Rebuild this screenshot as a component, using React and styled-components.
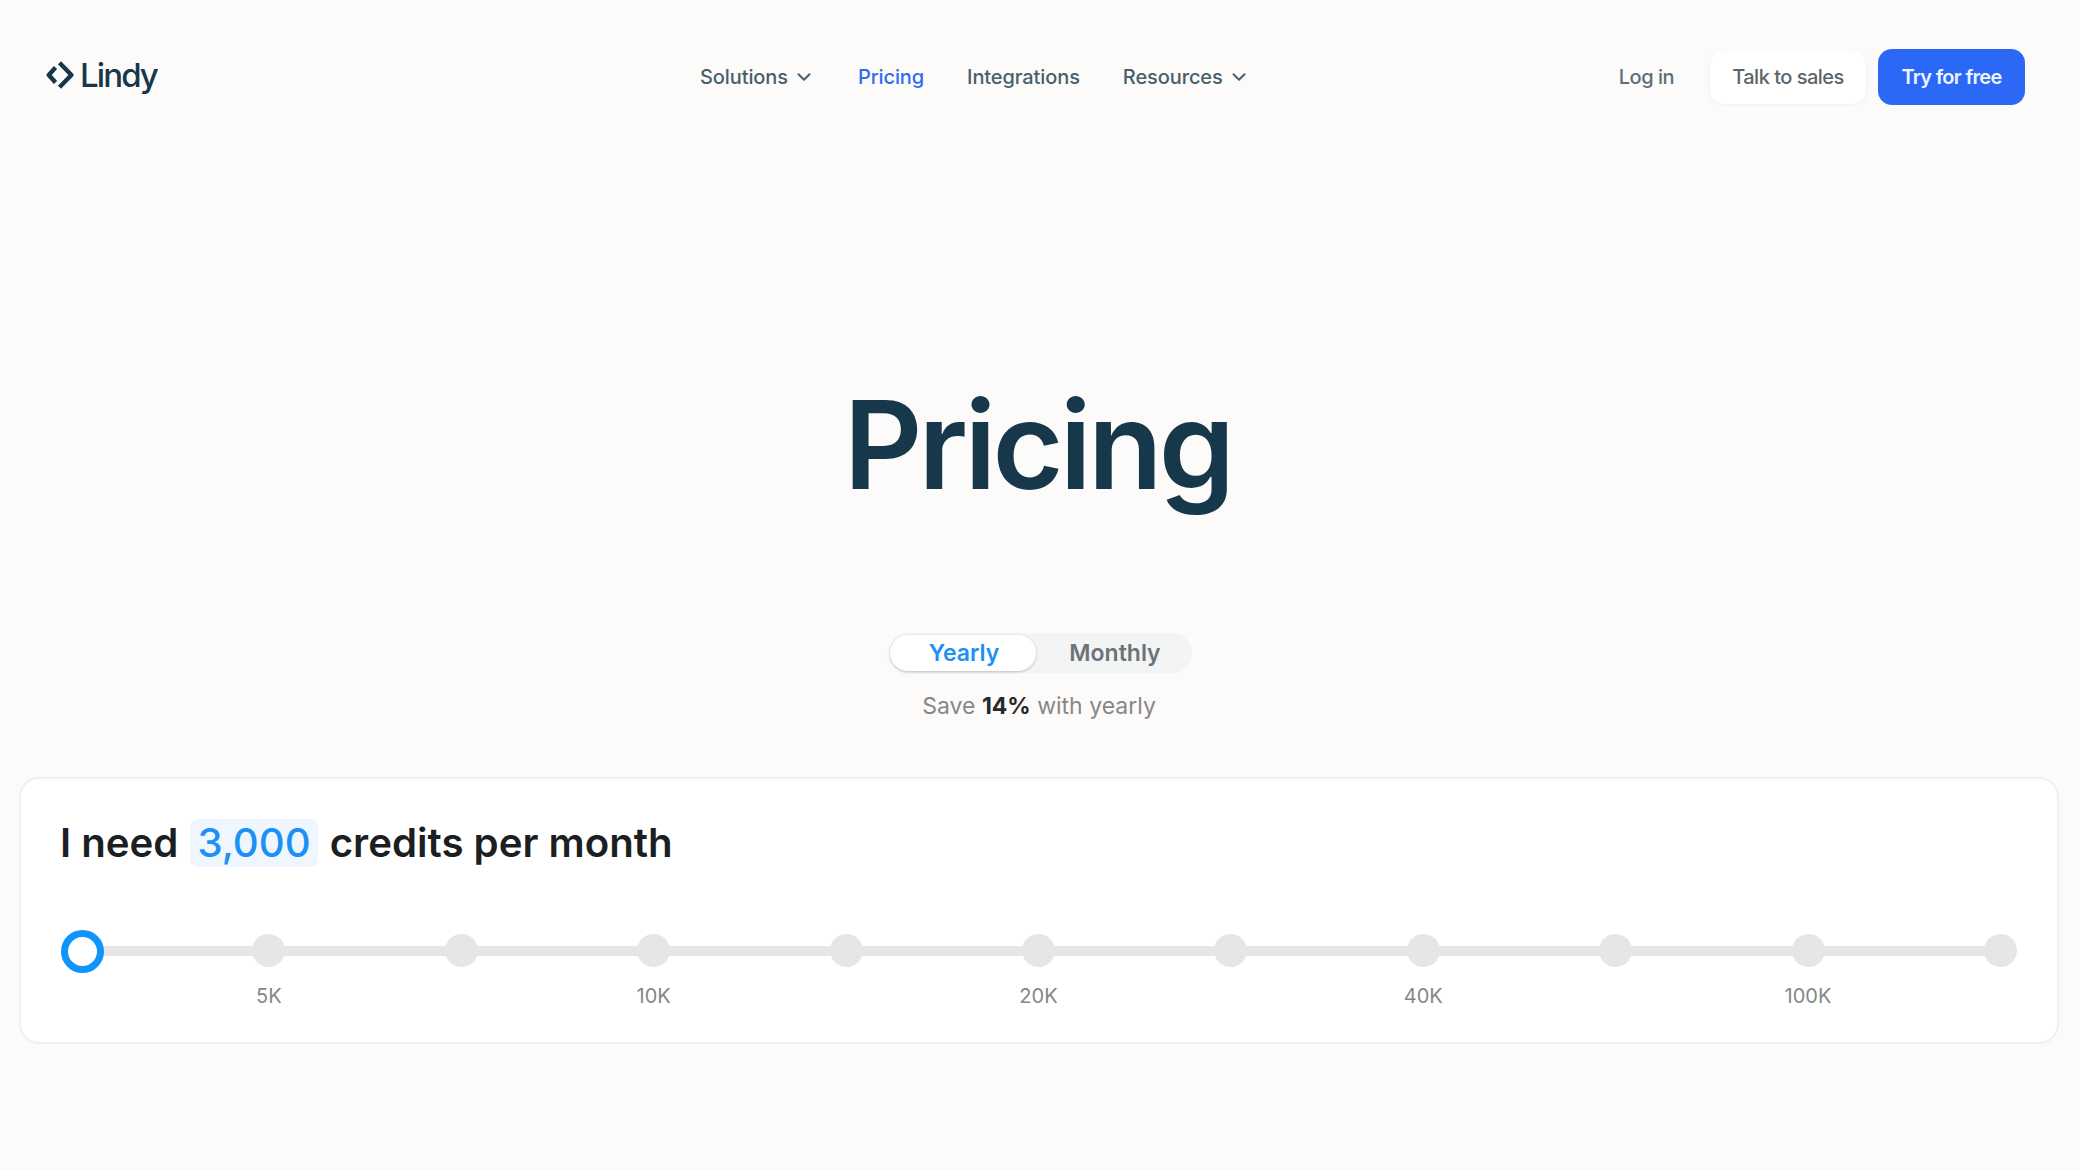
import styled, { createGlobalStyle } from 'styled-components'
import { ChevronDown } from 'lucide-react'

const GlobalStyle = createGlobalStyle`
  html, body {
    margin: 0;
    padding: 0;
    background: #fdfbf9;
    font-family: Inter, "Noto Sans", sans-serif;
  }
`

const Page = styled.div`
  width: 2080px;
  height: 1170px;
  overflow: hidden;
  display: flex;
  flex-direction: column;
`

const Nav = styled.header`
  position: relative;
  height: 56px;
  margin-top: 49px;
  padding: 0 55px 0 46px;
  display: flex;
  align-items: center;
  justify-content: space-between;
`

const Logo = styled.div`
  display: flex;
  align-items: center;
  gap: 6px;
  margin-top: -4px;
  color: #17384a;
  font-size: 33px;
  font-weight: 500;
  letter-spacing: -1.9px;
`

const Links = styled.nav`
  position: absolute;
  left: 700px;
  top: 0;
  height: 56px;
  display: flex;
  align-items: center;
  gap: 43px;
`

const NavLink = styled.a`
  display: flex;
  align-items: center;
  gap: 5px;
  font-size: 20px;
  font-weight: 500;
  letter-spacing: -0.1px;
  color: ${(props) => (props.$active ? '#2f6bf2' : '#47606c')};
`

const Actions = styled.div`
  display: flex;
  align-items: center;
`

const LogIn = styled.a`
  font-size: 20px;
  font-weight: 500;
  letter-spacing: -0.5px;
  color: #5b6f78;
  margin-right: 36px;
`

const SalesButton = styled.button`
  width: 156px;
  height: 53px;
  margin-right: 12px;
  border: none;
  border-radius: 14px;
  background: #fff;
  box-shadow: 0 1px 4px rgba(0, 0, 0, 0.05);
  font: 500 20px Inter, sans-serif;
  letter-spacing: -0.5px;
  color: #59666d;
`

const TryButton = styled.button`
  width: 147px;
  height: 56px;
  border: none;
  border-radius: 14px;
  background: #2c68f6;
  font: 600 20px Inter, sans-serif;
  letter-spacing: -0.7px;
  color: #eef3ff;
`

const Title = styled.h1`
  margin: 262px 0 0;
  padding-right: 5px;
  text-align: center;
  font-size: 122px;
  line-height: 155px;
  font-weight: 600;
  letter-spacing: -3.8px;
  color: #17384a;
`

const Toggle = styled.div`
  align-self: center;
  width: 303px;
  height: 40px;
  margin-top: 111px;
  padding-left: 1px;
  box-sizing: border-box;
  border-radius: 20px;
  background: #f3f4f4;
  display: flex;
  align-items: center;
`

const ToggleOption = styled.div`
  width: ${(props) => (props.$selected ? '146px' : '156px')};
  height: 36px;
  padding-left: 3px;
  box-sizing: border-box;
  border-radius: 18px;
  display: flex;
  align-items: center;
  justify-content: center;
  font-size: 23px;
  font-weight: 600;
  color: ${(props) => (props.$selected ? '#1c90f5' : '#6d7377')};
  background: ${(props) => (props.$selected ? '#fff' : 'transparent')};
  box-shadow: ${(props) => (props.$selected ? '0 1px 3px rgba(0, 0, 0, 0.22)' : 'none')};
`

const SaveNote = styled.div`
  margin-top: 18px;
  padding-right: 2px;
  text-align: center;
  font-size: 23px;
  line-height: 30px;
  color: #85888a;

  b {
    font-weight: 700;
    color: #26282a;
  }
`

const Card = styled.section`
  position: relative;
  box-sizing: border-box;
  width: 2040px;
  height: 267px;
  margin: 56px 0 0 19px;
  padding: 40px 39px 0;
  border: 2px solid #f0f0ef;
  border-radius: 20px;
  background: #fff;
`

const Heading = styled.h2`
  margin: 0;
  display: flex;
  align-items: center;
  font-size: 40.2px;
  line-height: 48px;
  font-weight: 600;
  color: #1c1f21;
`

const Amount = styled.span`
  margin: 0 12px;
  padding: 0 7px;
  border-radius: 8px;
  background: #eff6fd;
  color: #1c90f5;
  font-weight: 500;
`

const Slider = styled.div`
  position: relative;
  margin: 67px 0 0;
  width: 1957px;
  display: flex;
  justify-content: space-between;

  &::before {
    content: '';
    position: absolute;
    left: 16px;
    right: 16px;
    top: 12px;
    height: 10px;
    background: #e6e6e6;
  }
`

const Stop = styled.div`
  position: relative;
  width: 33px;
  display: flex;
  flex-direction: column;
  align-items: center;
`

const Dot = styled.div`
  width: 33px;
  height: 33px;
  border-radius: 50%;
  background: ${(props) => (props.$hidden ? 'transparent' : '#e6e6e6')};
`

const StopLabel = styled.div`
  margin-top: 17px;
  height: 24px;
  font-size: 20px;
  line-height: 24px;
  white-space: nowrap;
  color: #83878a;
`

const Thumb = styled.div`
  position: absolute;
  left: 1px;
  top: -4px;
  box-sizing: border-box;
  width: 43px;
  height: 43px;
  border: 7px solid #0f94fb;
  border-radius: 50%;
  background: #fff;
`

const LogoMark = () => (
  <svg width="28" height="28" viewBox="0 0 28 28" fill="none" stroke="currentColor" strokeWidth="4.4">
    <path d="M9.5 6.5 L2.8 14 L9.5 21.5" strokeLinejoin="round" />
    <path d="M13.5 1.8 L25.4 14 L13.5 26.2" strokeLinejoin="round" />
  </svg>
)

const stops = ['', '5K', '', '10K', '', '20K', '', '40K', '', '100K', '']

const App = () => {
  return (
    <Page>
      <GlobalStyle />
      <Nav>
        <Logo>
          <LogoMark />
          Lindy
        </Logo>
        <Links>
          <NavLink>
            Solutions <ChevronDown size={22} strokeWidth={2.2} />
          </NavLink>
          <NavLink $active>Pricing</NavLink>
          <NavLink>Integrations</NavLink>
          <NavLink>
            Resources <ChevronDown size={22} strokeWidth={2.2} />
          </NavLink>
        </Links>
        <Actions>
          <LogIn>Log in</LogIn>
          <SalesButton>Talk to sales</SalesButton>
          <TryButton>Try for free</TryButton>
        </Actions>
      </Nav>

      <Title>Pricing</Title>

      <Toggle>
        <ToggleOption $selected>Yearly</ToggleOption>
        <ToggleOption>Monthly</ToggleOption>
      </Toggle>
      <SaveNote>
        Save <b>14%</b> with yearly
      </SaveNote>

      <Card>
        <Heading>
          I need <Amount>3,000</Amount> credits per month
        </Heading>
        <Slider>
          {stops.map((label, i) => (
            <Stop key={i}>
              <Dot $hidden={i === 0} />
              <StopLabel>{label}</StopLabel>
            </Stop>
          ))}
          <Thumb />
        </Slider>
      </Card>
    </Page>
  )
}

export default App
